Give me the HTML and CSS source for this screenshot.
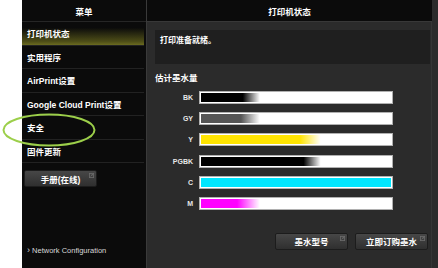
FILE: index.html
```html
<!DOCTYPE html>
<html>
<head>
<meta charset="utf-8">
<link rel="stylesheet" href="styles.css">
</head>
<body>
<div class="page">
  <div class="gutter"></div>
  <aside class="menu">
    <div class="head">菜单</div>
    <ul class="items">
      <li class="item active">打印机状态</li>
      <li class="item">实用程序</li>
      <li class="item">AirPrint设置</li>
      <li class="item">Google Cloud Print设置</li>
      <li class="item">安全</li>
      <li class="item">固件更新</li>
    </ul>
    <div class="btn-row"><button class="btn small">手册(在线)<svg class="ext" viewBox="0 0 6 6"><rect x="0.5" y="0.5" width="5" height="5" fill="none" stroke="#6a6a6a"/><path d="M2 4 L4.5 1.5 M3 1.5 H4.5 V3" stroke="#6a6a6a" fill="none"/></svg></button></div>
    <div class="spacer"></div>
    <div class="netconf"><span class="chev">›</span> Network Configuration</div>
  </aside>
  <div class="divider"></div>
  <main class="status">
    <div class="head">打印机状态</div>
    <div class="body">
      <div class="message">打印准备就绪。</div>
      <div class="section">估计墨水量</div>
      <div class="inks">
        <div class="ink"><span class="lbl">BK</span><div class="bar"><div class="fill" style="background:linear-gradient(90deg,#000 0%,#000 22%,rgba(0,0,0,0) 31%)"></div></div></div>
        <div class="ink"><span class="lbl">GY</span><div class="bar"><div class="fill" style="background:linear-gradient(90deg,#555 0%,#555 21%,rgba(85,85,85,0) 31%)"></div></div></div>
        <div class="ink"><span class="lbl">Y</span><div class="bar"><div class="fill" style="background:linear-gradient(90deg,#ffe400 0%,#ffe400 52%,rgba(255,228,0,0) 63%)"></div></div></div>
        <div class="ink"><span class="lbl">PGBK</span><div class="bar"><div class="fill" style="background:linear-gradient(90deg,#000 0%,#000 54%,rgba(0,0,0,0) 63%)"></div></div></div>
        <div class="ink"><span class="lbl">C</span><div class="bar"><div class="fill" style="background:#00e6ff"></div></div></div>
        <div class="ink"><span class="lbl">M</span><div class="bar"><div class="fill" style="background:linear-gradient(90deg,#f0f 0%,#f0f 19%,rgba(255,0,255,0) 31%)"></div></div></div>
      </div>
      <div class="actions">
        <button class="btn">墨水型号<svg class="ext" viewBox="0 0 6 6"><rect x="0.5" y="0.5" width="5" height="5" fill="none" stroke="#6a6a6a"/><path d="M2 4 L4.5 1.5 M3 1.5 H4.5 V3" stroke="#6a6a6a" fill="none"/></svg></button>
        <button class="btn">立即订购墨水<svg class="ext" viewBox="0 0 6 6"><rect x="0.5" y="0.5" width="5" height="5" fill="none" stroke="#6a6a6a"/><path d="M2 4 L4.5 1.5 M3 1.5 H4.5 V3" stroke="#6a6a6a" fill="none"/></svg></button>
      </div>
    </div>
  </main>
  <svg class="circle" viewBox="0 0 100 40"><ellipse cx="49" cy="19" rx="45.5" ry="15.5" fill="none" stroke="#9ccf4a" stroke-width="2"/></svg>
</div>
</body>
</html>
```
FILE: styles.css
```css
* { box-sizing: border-box; }
html, body { margin: 0; padding: 0; background: #fff; }
body {
  font-family: "Liberation Sans", "Noto Sans CJK SC", sans-serif;
  color: #fff;
  font-weight: bold;
}
.page {
  position: relative;
  display: flex;
  width: 438px;
  height: 268px;
  overflow: hidden;
}
.gutter { width: 22px; background: #fff; flex: none; }
.menu {
  width: 124px;
  flex: none;
  background: #0b0b0b;
  display: flex;
  flex-direction: column;
}
.head {
  height: 22px;
  display: flex;
  align-items: center;
  justify-content: center;
  font-size: 8.5px;
  background: #0b0b0b;
  border-bottom: 1px solid #262626;
  flex: none;
}
.items { list-style: none; margin: 0; padding: 0; }
.item {
  height: 23.5px;
  display: flex;
  align-items: center;
  padding-left: 5px;
  font-size: 8.5px;
  border-bottom: 1px solid #222;
  margin-right: 2px;
}
.item.active {
  background: linear-gradient(#0b0b0b 25%, #4e4e17 85%, #6b6b20);
}
.btn-row { padding: 7px 0 0 2px; }
.btn {
  position: relative;
  font-family: "Liberation Sans", "Noto Sans CJK SC", sans-serif;
  font-weight: bold;
  font-size: 8.5px;
  color: #fff;
  background: linear-gradient(#474747, #2f2f2f);
  border: 1px solid #1c1c1c;
  border-radius: 2px;
  height: 17px;
  padding: 0;
  display: flex;
  align-items: center;
  justify-content: center;
}
.btn.small { width: 73px; }
.ext {
  position: absolute;
  top: 2px;
  right: 2px;
  width: 5px;
  height: 5px;
}
.spacer { flex: 1; }
.netconf {
  font-weight: normal;
  font-size: 7.5px;
  color: #d8d8d8;
  padding: 0 0 13px 5px;
}
.chev { font-size: 9px; }
.divider { width: 1px; background: #3a3a3a; flex: none; }
.status {
  flex: 1;
  background: #2b2b2b;
  display: flex;
  flex-direction: column;
  border-right: 6px solid #2b2b2b;
  box-shadow: inset -1px 0 0 #353535;
}
.status .head { border-bottom: 1px solid #383838; }
.body {
  flex: 1;
  padding: 8px 2px 0 8px;
  display: flex;
  flex-direction: column;
}
.message {
  background: #1f1f1f;
  height: 34px;
  padding: 4px 5px;
  font-size: 8px;
}
.section {
  font-size: 8.5px;
  margin-top: 8px;
  height: 12px;
  line-height: 12px;
}
.inks {
  display: flex;
  flex-direction: column;
  gap: 8.2px;
  margin-top: 7px;
}
.ink {
  display: flex;
  align-items: center;
  gap: 6px;
  height: 13px;
}
.lbl {
  width: 38px;
  text-align: right;
  font-size: 7px;
  color: #e8e8e8;
}
.bar {
  width: 194px;
  height: 13px;
  background: #fff;
  border: 1px solid #b0b0b0;
  padding: 1px;
}
.fill { width: 100%; height: 100%; }
.actions {
  display: flex;
  justify-content: flex-end;
  gap: 7px;
  margin-top: 23px;
  padding-right: 2px;
}
.actions .btn { width: 73px; height: 17px; }
.circle {
  position: absolute;
  left: 0;
  top: 111px;
  width: 100px;
  height: 40px;
}
```
